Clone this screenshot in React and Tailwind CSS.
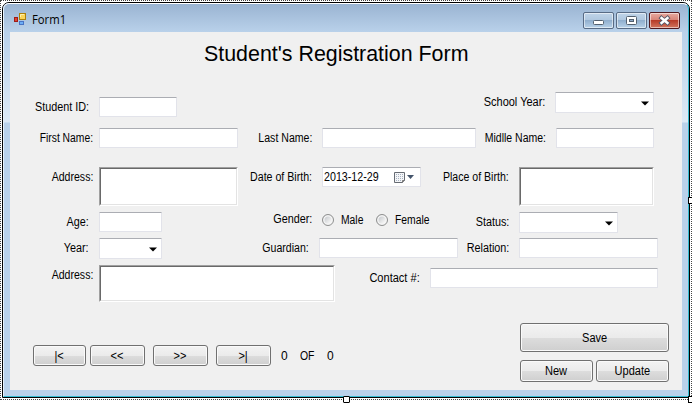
import React from "react";

function Text({ children, className = "" }) {
  return (
    <span className={`inline-block whitespace-nowrap leading-5 ${className}`}>{children}</span>
  );
}

// Right-aligned caption that fills the space up to its field
function Label({ children, className = "", scale = "scale-x-[.9]" }) {
  return (
    <label className={`flex h-5 shrink-0 justify-end ${className}`}>
      <Text className={`origin-right ${scale}`}>{children}</Text>
    </label>
  );
}

const fieldStyle = "shrink-0 rounded-[1px] border border-[#e2e3ea] border-t-[#abadb3] bg-white";

function Input({ className = "" }) {
  return <div className={`h-5 ${fieldStyle} ${className}`} />;
}

function TextArea({ className = "" }) {
  return (
    <div className={`shrink-0 border border-t-[#a0a0a0] border-l-[#a0a0a0] border-r-white border-b-white ${className}`}>
      <div className="h-full border border-t-[#696969] border-l-[#696969] border-r-[#e3e3e3] border-b-[#e3e3e3] bg-white" />
    </div>
  );
}

function Select({ className = "" }) {
  return (
    <div className={`flex h-[21px] items-center justify-end pr-1 ${fieldStyle} ${className}`}>
      <svg width="8" height="5" viewBox="0 0 8 5" className="mt-px">
        <path d="M0 .5h8L4 4.5z" fill="#000" />
      </svg>
    </div>
  );
}

function Button({ children, className = "" }) {
  return (
    <button
      className={`flex shrink-0 items-center justify-center rounded-[3px] border border-[#707070] bg-[linear-gradient(#f3f3f3,#ebebeb_50%,#dddddd_50%,#cfcfcf)] shadow-[inset_0_0_0_1px_#fafafa] ${className}`}
    >
      <Text className="scale-x-[.92]">{children}</Text>
    </button>
  );
}

function Radio({ children, className = "" }) {
  return (
    <div className={`flex h-5 shrink-0 items-center ${className}`}>
      <span className="mr-[7px] h-3 w-3 shrink-0 rounded-full border border-[#8e8f8f] bg-[linear-gradient(135deg,#b9bdc2,#f5f5f5_75%)] shadow-[inset_0_0_0_1.5px_#f4f4f4]" />
      <Text className="origin-left scale-x-[.86]">{children}</Text>
    </div>
  );
}

function DatePicker() {
  return (
    <div className={`flex h-5 w-[99px] items-center ${fieldStyle}`}>
      <Text className="ml-px w-[69px] origin-left scale-x-[.89]">2013-12-29</Text>
      <svg width="22" height="13" viewBox="0 0 22 13" className="shrink-0">
        <path d="M1.500 1.500h10v8l-2 2h-8z" fill="#f4f5f7" stroke="#666b73" strokeLinejoin="round" />
        <path d="M9.500 11.500v-2h2" fill="#aaa" stroke="#777" />
        <path d="M3 3.500h7M3 5.500h7M3 7.500h7M3 9.500h5" stroke="#a6b2c2" strokeDasharray="1 1" />
        <path d="M14 4h7l-3.500 4z" fill="#44546b" />
      </svg>
    </div>
  );
}

function AppIcon() {
  return (
    <svg width="14" height="14" viewBox="0 0 14 14" className="shrink-0">
      <rect x=".5" y="4.500" width="3" height="4" fill="#df4430" stroke="#9e1b18" />
      <rect x="5.500" y=".5" width="6" height="6" fill="#fbd55a" stroke="#ad800d" />
      <path d="M6.500 4V1.500H10" fill="none" stroke="#fff0ab" />
      <rect x="5.500" y="8.500" width="4" height="3" fill="#6daef5" stroke="#4774c5" />
    </svg>
  );
}

const captionStyle =
  "flex h-[17px] w-[31px] items-center justify-center rounded-[2px] border shadow-[inset_0_0_0_1px_#ffffff88]";

function CaptionButtons() {
  return (
    <div className="mt-[8px] ml-auto flex gap-[2px] pr-[8px]">
      <div className={`${captionStyle} border-[#586b85] bg-[linear-gradient(#c0d4e9,#afc7df_48%,#91afce_50%,#b8d2e9)]`}>
        <svg width="13" height="13"><rect x="1.500" y="6.500" width="10" height="4" rx="1" fill="#fff" stroke="#53606f" /></svg>
      </div>
      <div className={`${captionStyle} border-[#586b85] bg-[linear-gradient(#c0d4e9,#afc7df_48%,#91afce_50%,#b8d2e9)]`}>
        <svg width="13" height="13"><rect x="1.500" y="2.500" width="10" height="8" rx="1" fill="#fff" stroke="#53606f" /><rect x="4.500" y="5.500" width="4" height="2" fill="#8eaac9" stroke="#53606f" /></svg>
      </div>
      <div className={`${captionStyle} border-[#50191f] bg-[linear-gradient(#e7aaa0,#d78275_48%,#b73c29_50%,#d2765f)]`}>
        <svg width="13" height="13" viewBox="0 0 13 13"><path d="M3.500 4l6 5m0-5l-6 5" stroke="#535666" strokeWidth="4.200" strokeLinecap="square" /><path d="M3.500 4l6 5m0-5l-6 5" stroke="#fff" strokeWidth="2.400" strokeLinecap="square" /></svg>
      </div>
    </div>
  );
}

export default function App() {
  return (
    <div className="relative h-[403px] w-[692px] overflow-hidden bg-white font-['Liberation_Sans',Arial,sans-serif] text-[12px] text-black">
      <div className="h-[400px] w-[692px] border border-dotted border-[#444] p-px">
        <div className="h-[396px] w-[688px] rounded-t-[7px] border border-black bg-[#b9d1ea]">
          <div className="flex h-full flex-col rounded-t-[6px] border border-t-white border-r-[#35bad0] border-b-[#35bad0] border-l-[#e5f1fb] bg-[linear-gradient(#9ab4d2,#b9d1ea_28px,#dce9f6_118px,#b9d1ea_119px)]">
            <div className="flex h-[28px] shrink-0 pl-[10px]">
              <div className="mt-[9px] flex h-[14px] items-center">
                <AppIcon />
                <Text className="ml-[4px] origin-left scale-x-[.94] font-['Open_Sans',sans-serif] text-[12px]">Form1</Text>
              </div>
              <CaptionButtons />
            </div>

            <main className="ml-[6px] flex h-[358px] w-[672px] shrink-0 flex-col bg-[#f0f0f0]">
              <h1 className="h-[60px] pt-[8px] pl-[194px] text-[21.400px] leading-7 whitespace-nowrap">Student's Registration Form</h1>

              <div className="flex h-[36px] items-start">
                <Label className="mt-[5px] w-[79px]">Student ID:</Label>
                <Input className="mt-[5px] ml-[10px] w-[78px]" />
                <Label className="w-[368px]" scale="scale-x-[.915]">School Year:</Label>
                <Select className="ml-[10px] w-[99px]" />
              </div>

              <div className="flex h-[39px] items-start">
                <Label className="w-[83px]" scale="scale-x-[.86]">First Name:</Label>
                <Input className="ml-[6px] w-[139px]" />
                <Label className="w-[74px]" scale="scale-x-[.88]">Last Name:</Label>
                <Input className="ml-[10px] w-[154px]" />
                <Label className="w-[70px]" scale="scale-x-[.875]">Midlle Name:</Label>
                <Input className="ml-[10px] w-[98px]" />
              </div>

              <div className="flex h-[45px] items-start">
                <Label className="w-[83px]" scale="scale-x-[.88]">Address:</Label>
                <TextArea className="ml-[6px] h-[39px] w-[139px]" />
                <Label className="mr-[10px] w-[74px]" scale="scale-x-[.885]">Date of Birth:</Label>
                <DatePicker />
                <Label className="w-[88px]" scale="scale-x-[.88]">Place of Birth:</Label>
                <TextArea className="ml-[10px] h-[39px] w-[135px]" />
              </div>

              <div className="flex h-[26px] items-start">
                <Label className="w-[79px]">Age:</Label>
                <Input className="ml-[10px] w-[63px]" />
                <Label className="-mt-[3px] w-[150px]">Gender:</Label>
                <Radio className="-mt-[2px] ml-[10px] w-[54px]">Male</Radio>
                <Radio className="-mt-[2px] w-[60px]">Female</Radio>
                <Label className="w-[73px]">Status:</Label>
                <Select className="ml-[10px] w-[99px]" />
              </div>

              <div className="flex h-[27px] items-start">
                <Label className="w-[79px]">Year:</Label>
                <Select className="ml-[10px] w-[63px]" />
                <Label className="w-[147px]" scale="scale-x-[.88]">Guardian:</Label>
                <Input className="ml-[10px] w-[139px]" />
                <Label className="w-[51px]">Relation:</Label>
                <Input className="ml-[10px] w-[139px]" />
              </div>

              <div className="flex h-[58px] items-start">
                <Label className="w-[83px]" scale="scale-x-[.88]">Address:</Label>
                <TextArea className="ml-[6px] h-[37px] w-[236px]" />
                <Label className="mt-[3px] w-[85px]" scale="scale-x-[.92]">Contact #:</Label>
                <Input className="mt-[3px] ml-[10px] w-[228px]" />
              </div>

              <div className="flex items-start pl-[23px]">
                <div className="mt-[22px] flex h-[21px] items-center">
                  <Button className="h-[21px] w-[53px]">|&lt;</Button>
                  <Button className="ml-[4px] h-[21px] w-[55px]">&lt;&lt;</Button>
                  <Button className="ml-[8px] h-[21px] w-[55px]">&gt;&gt;</Button>
                  <Button className="ml-[8px] h-[21px] w-[55px]">&gt;|</Button>
                  <Text className="ml-[10px] w-[19px]">0</Text>
                  <Text className="w-[27px] origin-left scale-x-[.87]">OF</Text>
                  <Text className="w-[10px]">0</Text>
                </div>
                <div className="ml-[183px] grid w-[149px] grid-cols-2 gap-x-[3px] gap-y-[8px]">
                  <Button className="col-span-2 h-[29px]">Save</Button>
                  <Button className="h-[22px]">New</Button>
                  <Button className="h-[22px]">Update</Button>
                </div>
              </div>
            </main>
          </div>
        </div>
      </div>
      <span className="absolute top-[396px] left-[343px] h-[7px] w-[7px] rounded-[1px] border border-black bg-white" />
      <span className="absolute top-[197px] left-[688px] h-[7px] w-[7px] border border-black bg-white" />
      <span className="absolute top-[396px] left-[688px] h-[7px] w-[7px] border border-black bg-white" />
    </div>
  );
}
